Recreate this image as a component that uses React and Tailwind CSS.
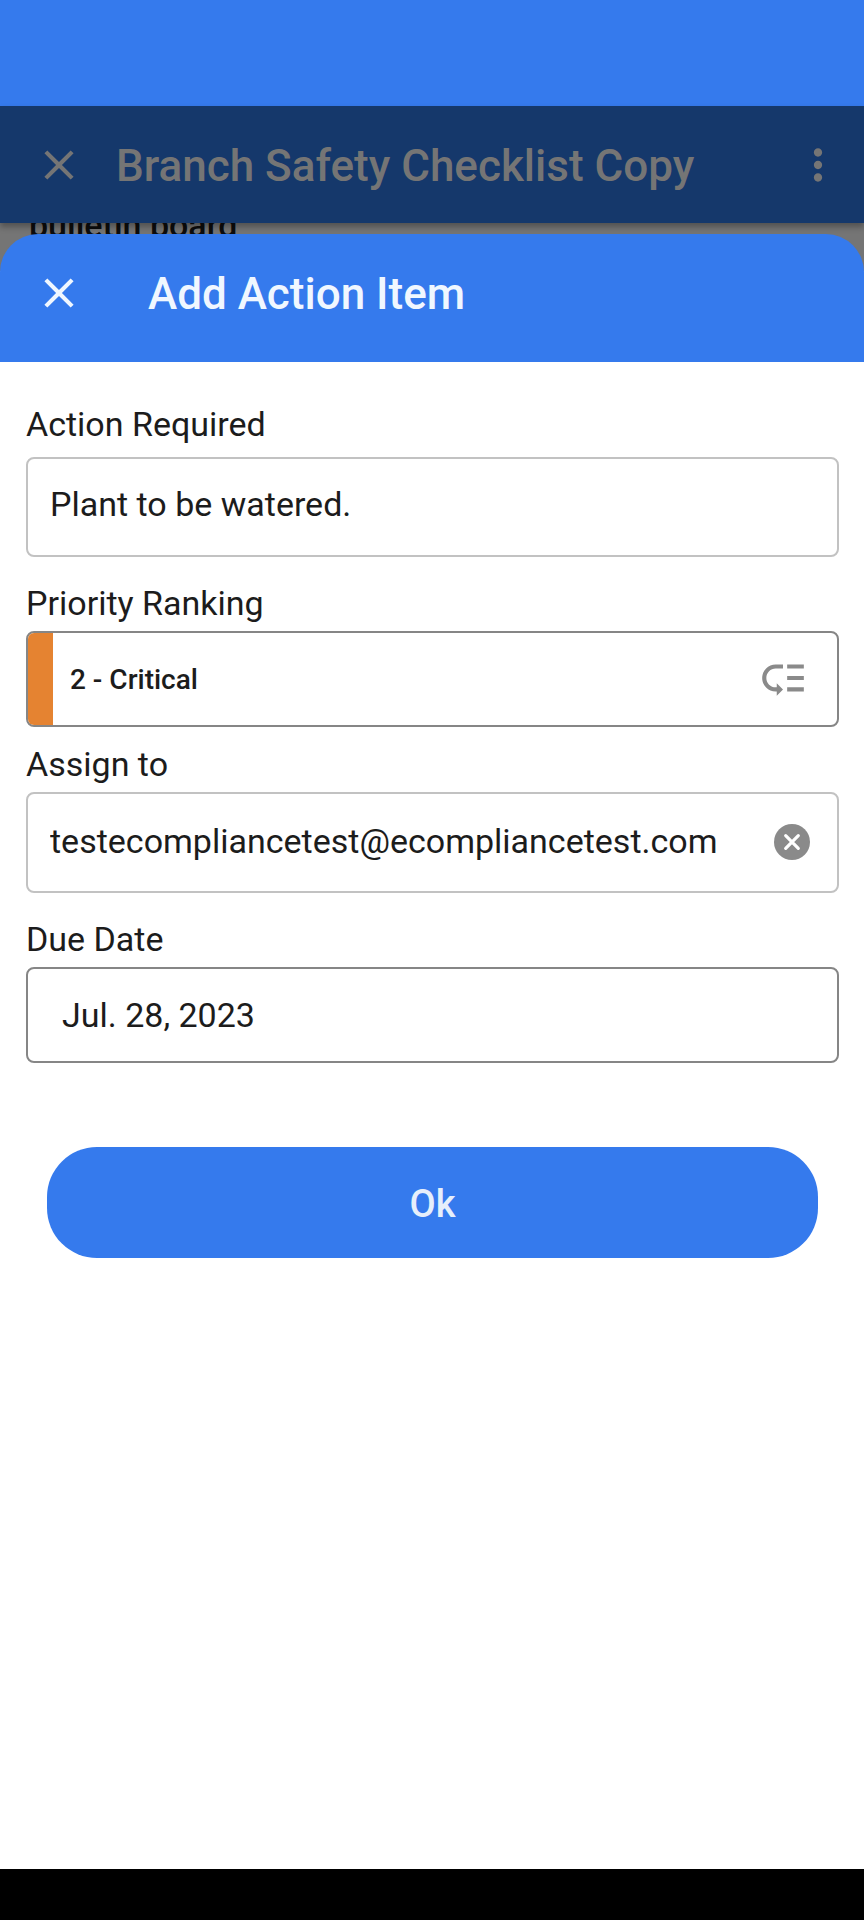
import React, { useState } from "react";
import { MdClose, MdLowPriority, MdMoreVert } from "react-icons/md";

const ClearIcon = () => (
  <svg viewBox="0 0 36 36" className="size-9" aria-hidden="true">
    <circle cx="18" cy="18" r="18" fill="#8a8a8a" />
    <path
      d="M11.7 11.7 24.3 24.3M24.3 11.7 11.7 24.3"
      stroke="#fff"
      strokeWidth="3.2"
      strokeLinecap="round"
    />
  </svg>
);

const Field = ({ id, label, className, children }) => (
  <div className={className}>
    <label htmlFor={id} className="block h-10 text-[34px] leading-10">
      {label}
    </label>
    {children}
  </div>
);

const ChecklistScreen = () => (
  <div>
    <div className="h-[106px] bg-[#357aed]" />

    <header className="relative z-10 flex h-[117px] items-center bg-[#15386b] pl-[34px] pr-[21px] text-[#757575] shadow-[0_4px_6px_rgba(0,0,0,0.3)]">
      <button type="button" aria-label="Close checklist">
        <MdClose className="size-[50px]" />
      </button>
      <h1 className="ml-8 flex-1 pt-[2px] text-[44px] font-medium leading-none">
        Branch Safety Checklist Copy
      </h1>
      <button type="button" aria-label="More options">
        <MdMoreVert className="size-[50px]" />
      </button>
    </header>

    <div className="h-12 overflow-hidden bg-[#757575] px-[29px]">
      <p className="-mt-4 text-[34px] font-medium leading-9 text-[#0c0c0c]">
        bulletin board
      </p>
    </div>
  </div>
);

const App = () => {
  const [action, setAction] = useState("Plant to be watered.");
  const [priority, setPriority] = useState("2");
  const [assignee, setAssignee] = useState(
    "testecompliancetest@ecompliancetest.com"
  );
  const [dueDate, setDueDate] = useState("Jul. 28, 2023");

  const onSubmitHandler = (e) => {
    e.preventDefault();
  };

  return (
    <div className="flex min-h-screen flex-col bg-white font-['Roboto',sans-serif] text-[#1c1c1c]">
      <ChecklistScreen />

      <section className="relative z-20 -mt-[37px] flex-1">
        <header className="flex h-32 items-center rounded-t-[38px] bg-[#357aed] pb-[10px] pl-[34px] text-[#f0f7ff]">
          <button type="button" aria-label="Close">
            <MdClose className="size-[50px]" />
          </button>
          <h2 className="ml-16 pt-[2px] text-[44px] font-medium leading-none">
            Add Action Item
          </h2>
        </header>

        <form onSubmit={onSubmitHandler} className="pl-[26px] pr-[25px] pt-[42px]">
          <Field id="action" label="Action Required">
            <input
              id="action"
              type="text"
              className="mt-[13px] block h-[100px] w-full rounded-lg border-2 border-[#c2c2c2] px-[22px] pb-[6px] text-[34px] outline-none"
              value={action}
              onChange={(e) => setAction(e.target.value)}
            />
          </Field>

          <Field id="priority" label="Priority Ranking" className="mt-[26px]">
            <div className="relative mt-2 flex h-24 overflow-hidden rounded-lg border-2 border-[#868686]">
              <div className="w-[25px] bg-[#e58331]" />
              <select
                id="priority"
                className="flex-1 appearance-none bg-transparent pl-[17px] pt-[2px] text-[28px] font-medium outline-none"
                value={priority}
                onChange={(e) => setPriority(e.target.value)}
              >
                <option value="2">2 - Critical</option>
              </select>
              <MdLowPriority className="pointer-events-none absolute right-[29px] top-[21px] size-[50px] text-[#8a8a8a]" />
            </div>
          </Field>

          <Field id="assignee" label="Assign to" className="mt-[17px]">
            <div className="mt-2 flex h-[101px] items-center rounded-lg border-2 border-[#c2c2c2] pb-[2px] pl-[22px] pr-[27px]">
              <input
                id="assignee"
                type="text"
                className="h-full min-w-0 flex-1 pb-[2px] text-[34px] outline-none"
                value={assignee}
                onChange={(e) => setAssignee(e.target.value)}
              />
              <button
                type="button"
                aria-label="Clear assignee"
                onClick={() => setAssignee("")}
              >
                <ClearIcon />
              </button>
            </div>
          </Field>

          <Field id="dueDate" label="Due Date" className="mt-[26px]">
            <input
              id="dueDate"
              type="text"
              className="mt-2 block h-24 w-full rounded-lg border-2 border-[#868686] px-[34px] text-[34px] outline-none"
              value={dueDate}
              onChange={(e) => setDueDate(e.target.value)}
            />
          </Field>

          <div className="mt-[84px] px-[21px]">
            <button
              type="submit"
              className="h-[111px] w-full rounded-[50px] bg-[#357aed] pt-1 text-[38px] font-medium text-[#e6effb]"
            >
              Ok
            </button>
          </div>
        </form>
      </section>

      <div className="h-[51px] bg-black" />
    </div>
  );
};

export default App;
